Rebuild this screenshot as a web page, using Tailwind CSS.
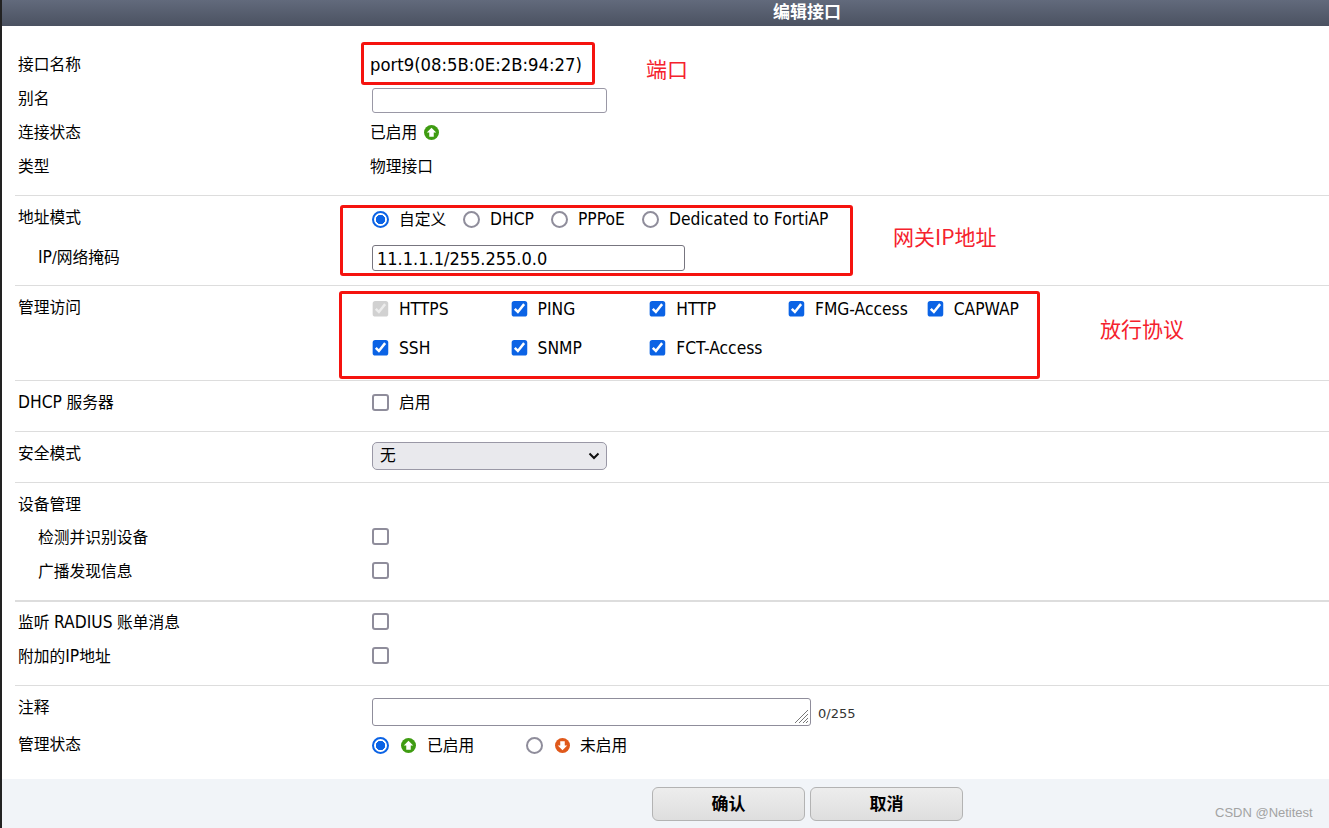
<!doctype html>
<html lang="zh">
<head>
<meta charset="utf-8">
<script src="https://cdn.jsdelivr.net/npm/@tailwindcss/browser@4"></script>
<title>编辑接口</title>
</head>
<body class="bg-white">
<div class="relative w-[1329px] h-[828px] overflow-hidden border-l-2 border-[#222] bg-white text-[15.75px] text-black font-['DejaVu_Sans_Condensed','DejaVu_Sans','Noto_Sans_CJK_SC',sans-serif]">
  <div class="h-[26px] bg-gradient-to-b from-[#626a7c] to-[#4b5261] flex items-center pl-[771px] text-white font-bold text-[17px]">编辑接口</div>

  <section class="ml-[13px] pt-[21px] pb-[12px] border-b border-[#dddddd]">
    <div class="flex items-center h-[34px]"><div class="w-[355px] pl-[3px] mt-[2px]">接口名称</div><div class="text-[18.3px] mt-[2px]">port9(08:5B:0E:2B:94:27)</div></div>
    <div class="flex items-center h-[34px]"><div class="w-[355px] pl-[3px] mt-[2px]">别名</div><input class="ml-[2px] mt-[5px] w-[235px] h-[25px] border border-[#9a98a6] rounded-[3px] bg-white"></div>
    <div class="flex items-center h-[34px]"><div class="w-[355px] pl-[3px] mt-[2px]">连接状态</div><div class="mt-[2px]">已启用</div>
      <svg class="ml-[7px] w-[15px] h-[15px]" viewBox="0 0 16 16"><circle cx="8" cy="8" r="8" fill="#3f9c12"/><path d="M8 3 L13 8 H10.4 V12.5 H5.6 V8 H3 Z" fill="#fff"/></svg></div>
    <div class="flex items-center h-[34px]"><div class="w-[355px] pl-[3px] mt-[2px]">类型</div><div class="mt-[2px]">物理接口</div></div>
  </section>

  <section class="ml-[13px] pt-[5px] pb-[10px] border-b border-[#dddddd]">
    <div class="flex items-center h-[34px]"><div class="w-[355px] pl-[3px]">地址模式</div>
      <div class="flex items-center ml-[2px] mt-[2px]">
        <input type="radio" name="m" checked class="appearance-none w-[17px] h-[17px] m-0 rounded-full border-2 border-[#0b63e5] bg-[radial-gradient(circle,#0b63e5_48%,#ffffff_54%)]"><span class="ml-[10px] w-[47px] mt-[2px] whitespace-nowrap">自定义</span>
        <input type="radio" name="m" class="appearance-none ml-[17px] w-[17px] h-[17px] my-0 mr-0 rounded-full border-2 border-[#8f8d9b] bg-white"><span class="ml-[10px] w-[44px] text-[17.3px] mt-[2px]">DHCP</span>
        <input type="radio" name="m" class="appearance-none ml-[17px] w-[17px] h-[17px] my-0 mr-0 rounded-full border-2 border-[#8f8d9b] bg-white"><span class="ml-[10px] w-[47px] text-[17.3px] mt-[2px]">PPPoE</span>
        <input type="radio" name="m" class="appearance-none ml-[17px] w-[17px] h-[17px] my-0 mr-0 rounded-full border-2 border-[#8f8d9b] bg-white"><span class="ml-[10px] text-[17.3px] mt-[2px] whitespace-nowrap">Dedicated to FortiAP</span>
      </div></div>
    <div class="h-[6px]"></div>
    <div class="flex items-center h-[34px]"><div class="w-[355px] pl-[23px]"><span class="text-[17.3px]">IP</span>/网络掩码</div><input value="11.1.1.1/255.255.0.0" class="ml-[2px] w-[313px] h-[26px] px-[4px] border border-[#77757f] rounded-[3px] bg-white text-[18px]"></div>
  </section>

  <section class="ml-[13px] pt-[6px] pb-[15px] border-b border-[#dddddd] flex items-start">
    <div class="w-[355px] pl-[3px] h-[30px] leading-[30px] mt-[1px]">管理访问</div>
    <div class="ml-[2px] grid grid-cols-[repeat(5,138.7px)] gap-y-[5px] text-[17.3px]">
      <label class="flex items-center h-[34px]"><input type="checkbox" checked disabled class="w-[13px] h-[13px] m-0 [zoom:1.3]"><span class="ml-[10px] mt-[2px]">HTTPS</span></label>
      <label class="flex items-center h-[34px]"><input type="checkbox" checked class="w-[13px] h-[13px] m-0 [zoom:1.3] accent-[#0b63e5]"><span class="ml-[10px] mt-[2px]">PING</span></label>
      <label class="flex items-center h-[34px]"><input type="checkbox" checked class="w-[13px] h-[13px] m-0 [zoom:1.3] accent-[#0b63e5]"><span class="ml-[10px] mt-[2px]">HTTP</span></label>
      <label class="flex items-center h-[34px]"><input type="checkbox" checked class="w-[13px] h-[13px] m-0 [zoom:1.3] accent-[#0b63e5]"><span class="ml-[10px] mt-[2px] whitespace-nowrap">FMG-Access</span></label>
      <label class="flex items-center h-[34px]"><input type="checkbox" checked class="w-[13px] h-[13px] m-0 [zoom:1.3] accent-[#0b63e5]"><span class="ml-[10px] mt-[2px]">CAPWAP</span></label>
      <label class="flex items-center h-[34px]"><input type="checkbox" checked class="w-[13px] h-[13px] m-0 [zoom:1.3] accent-[#0b63e5]"><span class="ml-[10px] mt-[2px]">SSH</span></label>
      <label class="flex items-center h-[34px]"><input type="checkbox" checked class="w-[13px] h-[13px] m-0 [zoom:1.3] accent-[#0b63e5]"><span class="ml-[10px] mt-[2px]">SNMP</span></label>
      <label class="flex items-center h-[34px]"><input type="checkbox" checked class="w-[13px] h-[13px] m-0 [zoom:1.3] accent-[#0b63e5]"><span class="ml-[10px] mt-[2px]">FCT-Access</span></label>
    </div>
  </section>

  <section class="ml-[13px] pt-[5px] pb-[11px] border-b border-[#dddddd]">
    <div class="flex items-center h-[34px]"><div class="w-[355px] pl-[3px]"><span class="text-[17.3px]">DHCP</span> 服务器</div><input type="checkbox" class="appearance-none ml-[2px] w-[17px] h-[17px] mt-0 mb-[1px] mr-0 border-2 border-[#8f8d9b] rounded-[3px] bg-white"><span class="ml-[10px]">启用</span></div>
  </section>

  <section class="ml-[13px] pt-[7px] pb-[9px] border-b border-[#dddddd]">
    <div class="flex items-center h-[34px]"><div class="w-[355px] pl-[3px] mb-[4px]">安全模式</div>
      <div class="relative ml-[2px] w-[235px] h-[28px]">
        <select class="appearance-none block w-full h-full pl-[7px] border border-[#9a98a6] rounded-[5px] bg-[#e9e9ed] text-[15.75px]"><option>无</option></select>
        <svg class="absolute right-[7px] top-[10px] w-[12px] h-[8px]" viewBox="0 0 12 8"><path d="M1.5 1.5 L6 6 L10.5 1.5" fill="none" stroke="#111" stroke-width="2"/></svg>
      </div></div>
  </section>

  <section class="ml-[13px] pt-[6px] pb-[12px] border-b-2 border-[#dddddd]">
    <div class="flex items-center h-[31px]"><div class="pl-[3px]">设备管理</div></div>
    <div class="flex items-center h-[34px]"><div class="w-[355px] pl-[23px] mt-[2px]">检测并识别设备</div><input type="checkbox" class="appearance-none ml-[2px] w-[17px] h-[17px] mt-0 mb-[2px] mr-0 border-2 border-[#8f8d9b] rounded-[3px] bg-white"></div>
    <div class="flex items-center h-[34px]"><div class="w-[355px] pl-[23px] mt-[2px]">广播发现信息</div><input type="checkbox" class="appearance-none ml-[2px] w-[17px] h-[17px] mt-0 mb-[2px] mr-0 border-2 border-[#8f8d9b] rounded-[3px] bg-white"></div>
  </section>

  <section class="ml-[13px] pt-[3px] pb-[12px] border-b border-[#dddddd]">
    <div class="flex items-center h-[34px]"><div class="w-[355px] pl-[3px] mt-[2px]">监听 <span class="text-[17.3px]">RADIUS</span> 账单消息</div><input type="checkbox" class="appearance-none ml-[2px] w-[17px] h-[17px] mt-0 mb-[2px] mr-0 border-2 border-[#8f8d9b] rounded-[3px] bg-white"></div>
    <div class="flex items-center h-[34px]"><div class="w-[355px] pl-[3px] mt-[2px]">附加的<span class="text-[17.3px]">IP</span>地址</div><input type="checkbox" class="appearance-none ml-[2px] w-[17px] h-[17px] mt-0 mb-[2px] mr-0 border-2 border-[#8f8d9b] rounded-[3px] bg-white"></div>
  </section>

  <section class="ml-[13px] pt-[9px] pb-[17px]">
    <div class="flex items-center h-[33px]"><div class="w-[355px] pl-[3px] mb-[8px]">注释</div>
      <div class="relative ml-[2px] w-[439px] h-[28px]">
        <textarea class="block w-full h-full resize-none border border-[#8f8d9b] rounded-[3px] bg-white"></textarea>
        <svg class="absolute right-[2px] bottom-[2px] w-[15px] h-[15px]" viewBox="0 0 15 15"><path d="M1 14 L14 1 M5 14 L14 5 M9 14 L14 9 M12 14 L14 12" stroke="#777" stroke-width="1" fill="none"/></svg>
      </div>
      <span class="ml-[7px] mt-[4px] text-[13px] text-[#333] font-['DejaVu_Sans',sans-serif]">0/255</span></div>
    <div class="flex items-center h-[34px]"><div class="w-[355px] pl-[3px]">管理状态</div>
      <input type="radio" name="s" checked class="appearance-none ml-[2px] w-[17px] h-[17px] my-0 mr-0 rounded-full border-2 border-[#0b63e5] bg-[radial-gradient(circle,#0b63e5_48%,#ffffff_54%)]">
      <svg class="ml-[12px] w-[15px] h-[15px]" viewBox="0 0 16 16"><circle cx="8" cy="8" r="8" fill="#3f9c12"/><path d="M8 3 L13 8 H10.4 V12.5 H5.6 V8 H3 Z" fill="#fff"/></svg>
      <span class="ml-[11px] w-[99px] mt-[2px]">已启用</span>
      <input type="radio" name="s" class="appearance-none w-[17px] h-[17px] m-0 rounded-full border-2 border-[#8f8d9b] bg-white">
      <svg class="ml-[12px] w-[15px] h-[15px]" viewBox="0 0 16 16"><circle cx="8" cy="8" r="8" fill="#e0591b"/><path d="M8 13 L3 8 H5.6 V3.5 H10.4 V8 H13 Z" fill="#fff"/></svg>
      <span class="ml-[10px] mt-[2px]">未启用</span></div>
  </section>

  <footer class="h-[49px] bg-[#f1f4f8] flex items-start pt-[8px] pl-[650px] gap-[5px]">
    <button class="w-[153px] h-[34px] pt-[2px] border border-[#b3b3b3] rounded-[6px] bg-gradient-to-b from-[#ededed] to-[#dedede] font-bold text-[17px]">确认</button>
    <button class="w-[153px] h-[34px] pt-[2px] border border-[#b3b3b3] rounded-[6px] bg-gradient-to-b from-[#ededed] to-[#dedede] font-bold text-[17px]">取消</button>
  </footer>

  <div class="absolute left-[359px] top-[42px] w-[234px] h-[43px] border-[3px] border-[#f5130f] rounded-[3px]"></div>
  <div class="absolute left-[644px] top-[54px] text-[21px] text-[#f5222d] leading-[28px] font-['Noto_Sans_CJK_SC',sans-serif]">端口</div>
  <div class="absolute left-[338px] top-[205px] w-[513px] h-[71px] border-[3px] border-[#f5130f] rounded-[3px]"></div>
  <div class="absolute left-[891px] top-[222px] text-[21px] text-[#f5222d] leading-[28px] font-['Noto_Sans_CJK_SC',sans-serif]">网关IP地址</div>
  <div class="absolute left-[337px] top-[291px] w-[701px] h-[88px] border-[3px] border-[#f5130f] rounded-[3px]"></div>
  <div class="absolute left-[1098px] top-[314px] text-[21px] text-[#f5222d] leading-[28px] font-['Noto_Sans_CJK_SC',sans-serif]">放行协议</div>
  <div class="absolute left-[1213px] top-[805px] text-[13px] text-[#a3a3a3] leading-[16px] font-['Liberation_Sans',sans-serif]">CSDN @Netitest</div>
</div>
</body>
</html>
